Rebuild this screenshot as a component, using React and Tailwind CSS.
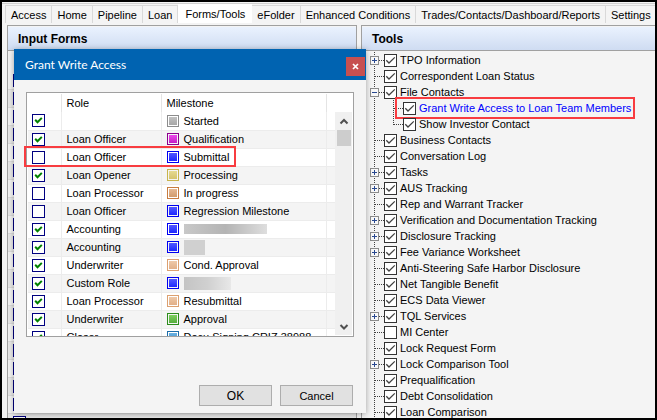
import { useState } from "react";

const tabs = [
  "Access",
  "Home",
  "Pipeline",
  "Loan",
  "Forms/Tools",
  "eFolder",
  "Enhanced Conditions",
  "Trades/Contacts/Dashboard/Reports",
  "Settings",
];

const tools = [
  { name: "TPO Information", node: "+" },
  { name: "Correspondent Loan Status" },
  { name: "File Contacts", node: "-" },
  { name: "Grant Write Access to Loan Team Members", child: true, active: true },
  { name: "Show Investor Contact", child: true, last: true },
  { name: "Business Contacts" },
  { name: "Conversation Log" },
  { name: "Tasks", node: "+" },
  { name: "AUS Tracking", node: "+" },
  { name: "Rep and Warrant Tracker" },
  { name: "Verification and Documentation Tracking", node: "+" },
  { name: "Disclosure Tracking", node: "+" },
  { name: "Fee Variance Worksheet", node: "+" },
  { name: "Anti-Steering Safe Harbor Disclosure" },
  { name: "Net Tangible Benefit" },
  { name: "ECS Data Viewer" },
  { name: "TQL Services", node: "+" },
  { name: "MI Center", off: true },
  { name: "Lock Request Form" },
  { name: "Lock Comparison Tool", node: "+" },
  { name: "Prequalification" },
  { name: "Debt Consolidation" },
  { name: "Loan Comparison" },
];

const GRAY = "border-[#8c8c8c] from-[#c4c4c4] to-[#a4a4a4]";
const MAGENTA = "border-[#8b008b] from-[#f04cf0] to-[#c010c0]";
const BLUE = "border-[#0000f0] from-[#5a5aff] to-[#1414ff]";
const YELLOW = "border-[#c8b44c] from-[#e8dc94] to-[#d2c068]";
const ORANGE = "border-[#c87c40] from-[#e8bc98] to-[#d09868]";
const PEACH = "border-[#dca070] from-[#f0ccac] to-[#e0ac84]";
const GREEN = "border-[#2c8c1c] from-[#84d464] to-[#50a838]";
const SKY = "border-[#1c6ca8] from-[#6cb4e4] to-[#4090c8]";

const milestones = [
  { on: true, role: "", name: "Started", color: GRAY },
  { on: true, role: "Loan Officer", name: "Qualification", color: MAGENTA },
  { on: false, role: "Loan Officer", name: "Submittal", color: BLUE },
  { on: true, role: "Loan Opener", name: "Processing", color: YELLOW },
  { on: false, role: "Loan Processor", name: "In progress", color: ORANGE },
  { on: false, role: "Loan Officer", name: "Regression Milestone", color: BLUE },
  { on: true, role: "Accounting", hidden: "h-[10px] w-[83px] from-[#c8c8c8] via-[#b4b4b4] to-[#dedede]", color: BLUE },
  { on: true, role: "Accounting", hidden: "h-[15px] w-[21px] from-[#d0d0d0] to-[#d0d0d0]", color: BLUE },
  { on: true, role: "Underwriter", name: "Cond. Approval", color: PEACH },
  { on: true, role: "Custom Role", hidden: "h-[13px] w-[47px] from-[#c4c4c4] via-[#d0d0d0] to-[#e8e8e8]", color: BLUE },
  { on: true, role: "Loan Processor", name: "Resubmittal", color: PEACH },
  { on: true, role: "Underwriter", name: "Approval", color: GREEN },
  { on: true, role: "Closer", name: "Docu Signing CRIZ 38988", color: SKY },
];

function Check({ label, on, navy }) {
  return (
    <span className="grid size-[13px] shrink-0">
      <input
        type="checkbox"
        defaultChecked={on}
        aria-label={label}
        className={`peer col-start-1 row-start-1 size-[13px] appearance-none border bg-white ${navy ? "border-[#000080]" : "border-[#333]"}`}
      />
      <svg
        viewBox="0 0 13 13"
        className="pointer-events-none invisible relative col-start-1 row-start-1 size-[13px] peer-checked:visible"
        fill="none"
        stroke={navy ? "#008000" : "#404040"}
        strokeWidth={navy ? 2 : 1.3}
      >
        {navy ? <path d="M3.2 5.8 L5.5 8.2 L9.8 3.9" /> : <path d="M2.3 6.3 L5 9 L10.8 3.4" />}
      </svg>
    </span>
  );
}

function TabBar({ tab, setTab }) {
  return (
    <nav role="tablist" className="flex h-[21px] items-end border-t border-[#d0d0d0] pl-[3px]">
      {tabs.map((t) => (
        <button
          key={t}
          role="tab"
          aria-selected={t === tab}
          onClick={() => setTab(t)}
          className={
            t === tab
              ? "h-full whitespace-nowrap bg-white px-[7px]"
              : "h-[18px] whitespace-nowrap border-t border-r border-[#d9d9d9] px-[5px] first:border-l"
          }
        >
          {t}
        </button>
      ))}
    </nav>
  );
}

function PanelHeader({ children }) {
  return (
    <h2 className="mt-px flex h-6 items-center border-b border-[#a0a0a0] bg-linear-to-b from-[#eaf2fe] to-[#cfdcf2] px-[10px] text-[12px] font-bold">
      {children}
    </h2>
  );
}

// Old rows of the form list, mostly under the dialog
function InputForms() {
  return (
    <section className="w-[350px] shrink-0 overflow-hidden border-t border-x border-[#a0a0a0]">
      <PanelHeader>Input Forms</PanelHeader>
      <ul className="pt-[21px]">
        {Array.from({ length: 20 }, (_, i) => (
          <li key={i} className="flex h-[18px] items-center border-b border-[#dcdcdc] pl-[5px] odd:bg-[#f4f4f4] even:bg-[#e8e8e8]">
            <Check navy label={`Form ${i + 1}`} />
          </li>
        ))}
      </ul>
    </section>
  );
}

function ToolRow({ tool }) {
  return (
    <li className="flex h-4 items-center">
      <span className="grid h-4 w-[22px] shrink-0">
        <svg viewBox="0 0 22 16" className="h-4 w-[22px]" shapeRendering="crispEdges">
          <path d="M4.5 0V16" stroke="#404040" strokeDasharray="1 1" />
          {!tool.child && <path d="M5 8.5H14" stroke="#404040" strokeDasharray="1 1" />}
          {tool.node && (
            <>
              <rect x="0.5" y="4.5" width="8" height="8" fill="#f8f8f8" stroke="#8c8c8c" />
              <path d="M2 8.5H7" stroke="#284890" />
              {tool.node === "+" && <path d="M4.5 6V11" stroke="#284890" />}
            </>
          )}
        </svg>
      </span>
      {tool.child && (
        <svg viewBox="0 0 11 16" className="h-4 w-[11px] shrink-0" shapeRendering="crispEdges">
          <path d={tool.last ? "M1.5 0V9" : "M1.5 0V16"} stroke="#404040" strokeDasharray="1 1" />
          <path d="M2 8.5H11" stroke="#404040" strokeDasharray="1 1" />
        </svg>
      )}
      <span className={`relative flex items-center ${tool.child ? "" : "-ml-2"}`}>
        <Check on={!tool.off} label={tool.name} />
        <a href="#tool" className={`ml-[3px] whitespace-nowrap ${tool.active ? "text-[#0000ff]" : ""}`}>
          {tool.name}
        </a>
        {tool.active && (
          <span className="pointer-events-none absolute -right-1 -left-2 -inset-y-[3px] border-2 border-[#f83c40]" />
        )}
      </span>
    </li>
  );
}

function Tools() {
  return (
    <section className="min-w-0 grow overflow-hidden border-t border-l border-[#a0a0a0]">
      <PanelHeader>Tools</PanelHeader>
      <ul className="pt-px pl-2">
        {tools.map((tool) => (
          <ToolRow key={tool.name} tool={tool} />
        ))}
      </ul>
    </section>
  );
}

function MilestoneTable() {
  return (
    <div className="relative">
      <div className="flex h-[245px] overflow-hidden border border-[#a0a0a0] bg-white p-px">
        <table className="h-fit grow table-fixed border-collapse text-left">
          <colgroup>
            <col className="w-[33px]" />
            <col className="w-[100px]" />
            <col className="w-[165px]" />
            <col />
          </colgroup>
          <thead>
            <tr className="h-[18px]">
              <th className="border-r border-[#e4e4e4] p-0" />
              <th className="border-r border-[#e4e4e4] p-0 pl-[5px] font-normal">Role</th>
              <th className="border-r border-[#e4e4e4] p-0 pl-[5px] font-normal">Milestone</th>
              <th className="p-0" />
            </tr>
          </thead>
          <tbody>
            {milestones.map((m, i) => (
              <tr key={i} className="h-[18px] odd:bg-white even:bg-[#f4f4f4]">
                <td className="border-r border-b border-[#ececec] p-0 pl-1">
                  <Check navy on={m.on} label={`${m.role} ${m.name || "milestone"}`} />
                </td>
                <td className="border-r border-b border-[#ececec] p-0 pl-[5px]">{m.role}</td>
                <td className="border-r border-b border-[#ececec] p-0 pl-[5px]">
                  <span className="flex h-[17px] items-center gap-[5px]">
                    <span className={`size-3 shrink-0 border bg-linear-to-b bg-clip-content p-px ${m.color}`} />
                    {m.hidden ? <span className={`bg-linear-to-r ${m.hidden}`} /> : <span className="whitespace-nowrap">{m.name}</span>}
                  </span>
                </td>
                <td className="border-b border-[#ececec] p-0" />
              </tr>
            ))}
          </tbody>
        </table>
        <div className="mt-[18px] flex w-[17px] shrink-0 flex-col items-center bg-[#f0f0f0]">
          <svg viewBox="0 0 14 18" className="h-[18px] w-[14px]" fill="none" stroke="#505050" strokeWidth="2">
            <path d="M3.5 11.5 L7 8 L10.5 11.5" />
          </svg>
          <div className="h-4 w-[14px] bg-[#cdcdcd]" />
          <svg viewBox="0 0 14 18" className="mt-auto h-[18px] w-[14px]" fill="none" stroke="#505050" strokeWidth="2">
            <path d="M3.5 8 L7 11.5 L10.5 8" />
          </svg>
        </div>
      </div>
      {/* highlight round the Submittal row */}
      <span className="pointer-events-none absolute top-[54px] -left-[2px] h-[21px] w-[212px] border-2 border-[#f83c40]" />
    </div>
  );
}

function GrantDialog() {
  return (
    <div
      role="dialog"
      aria-label="Grant Write Access"
      className="absolute top-[47px] left-[12px] flex h-[364px] w-[352px] flex-col bg-[#f4f4f4] shadow-[0_1px_6px_rgba(0,0,0,0.35)]"
    >
      <header className="flex h-[31px] shrink-0 items-center justify-between bg-[#0063b1] pr-px pl-[11px] text-white">
        <h1 className="font-['Lato',sans-serif] text-[12px]">Grant Write Access</h1>
        <button aria-label="Close" className="mt-1 flex size-[19px] items-center justify-center bg-[#c75050]">
          <svg viewBox="0 0 7 7" className="size-[7px]" stroke="white" strokeWidth="1.7">
            <path d="M1 1 L6 6 M6 1 L1 6" />
          </svg>
        </button>
      </header>
      <div className="px-3 pt-3">
        <MilestoneTable />
      </div>
      <footer className="mt-auto flex justify-end gap-2 pr-[13px] pb-[7px]">
        <button className="h-[21px] w-[73px] border border-[#adadad] bg-[#e1e1e1] text-[12px]">OK</button>
        <button className="h-[21px] w-[73px] border border-[#adadad] bg-[#e1e1e1]">Cancel</button>
      </footer>
    </div>
  );
}

export default function App() {
  const [tab, setTab] = useState("Forms/Tools");

  return (
    <div className="relative flex h-screen flex-col overflow-hidden border-2 border-black bg-[#f4f4f4] pt-px font-['Liberation_Sans',sans-serif] text-[11px] leading-4 text-black">
      <TabBar tab={tab} setTab={setTab} />
      <main className="mt-0.5 flex min-h-0 grow gap-1 pl-[5px]">
        <InputForms />
        <Tools />
      </main>
      <GrantDialog />
    </div>
  );
}
